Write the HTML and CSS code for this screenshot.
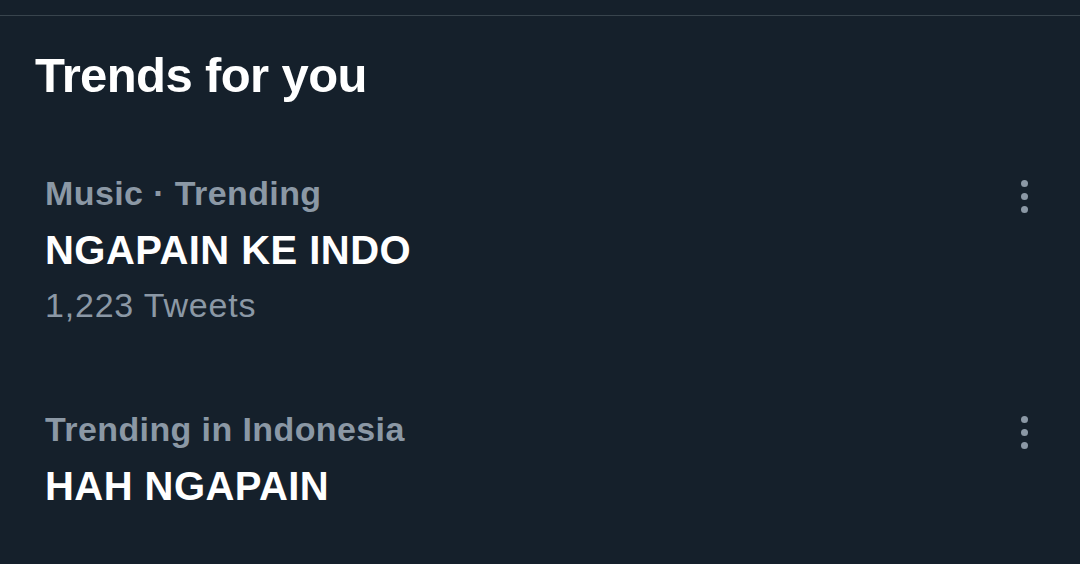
FILE: index.html
```html
<!DOCTYPE html>
<html lang="en">
<head>
    <meta charset="UTF-8">
    <meta name="viewport" content="width=device-width, initial-scale=1.0">
    <title>Trends for you</title>
    <link rel="stylesheet" href="styles.css">
</head>
<body>
    <div class="divider"></div>
    <h2 class="heading">Trends for you</h2>
    <div class="trends">
        <div class="trend">
            <div class="trend-text">
                <div class="meta">Music · Trending</div>
                <div class="name">NGAPAIN KE INDO</div>
                <div class="count">1,223 Tweets</div>
            </div>
            <div class="more">
                <span class="dot"></span>
                <span class="dot"></span>
                <span class="dot"></span>
            </div>
        </div>
        <div class="trend">
            <div class="trend-text">
                <div class="meta">Trending in Indonesia</div>
                <div class="name">HAH NGAPAIN</div>
            </div>
            <div class="more">
                <span class="dot"></span>
                <span class="dot"></span>
                <span class="dot"></span>
            </div>
        </div>
    </div>
</body>
</html>
```
FILE: styles.css
```css
body {
    background-color: #15202b;
    color: #ffffff;
    font-family: "Liberation Sans", Arial, sans-serif;
    margin: 0;
    height: 564px;
    overflow: hidden;
}
.divider {
    height: 1px;
    margin-top: 15px;
    background: #38444d;
}
.heading {
    margin: 31px 0 0 0;
    padding-left: 35px;
    font-size: 49px;
    line-height: 56px;
    letter-spacing: -0.6px;
    font-weight: bold;
}
.trends {
    display: flex;
    flex-direction: column;
    gap: 84px;
    margin-top: 70px;
    padding: 0 52px 0 45px;
}
.trend {
    display: flex;
    justify-content: space-between;
    align-items: flex-start;
}
.meta {
    color: #8b98a5;
    font-size: 34px;
    line-height: 40px;
    font-weight: bold;
    letter-spacing: 0.4px;
}
.name {
    margin-top: 13px;
    font-size: 40px;
    line-height: 48px;
    font-weight: bold;
    letter-spacing: 0.45px;
}
.count {
    margin-top: 11px;
    color: #8b98a5;
    font-size: 34px;
    line-height: 40px;
    letter-spacing: 0.8px;
}
.more {
    display: flex;
    flex-direction: column;
    gap: 6px;
    margin-top: 7px;
}
.dot {
    width: 7px;
    height: 7px;
    border-radius: 50%;
    background: #8b98a5;
}
```
